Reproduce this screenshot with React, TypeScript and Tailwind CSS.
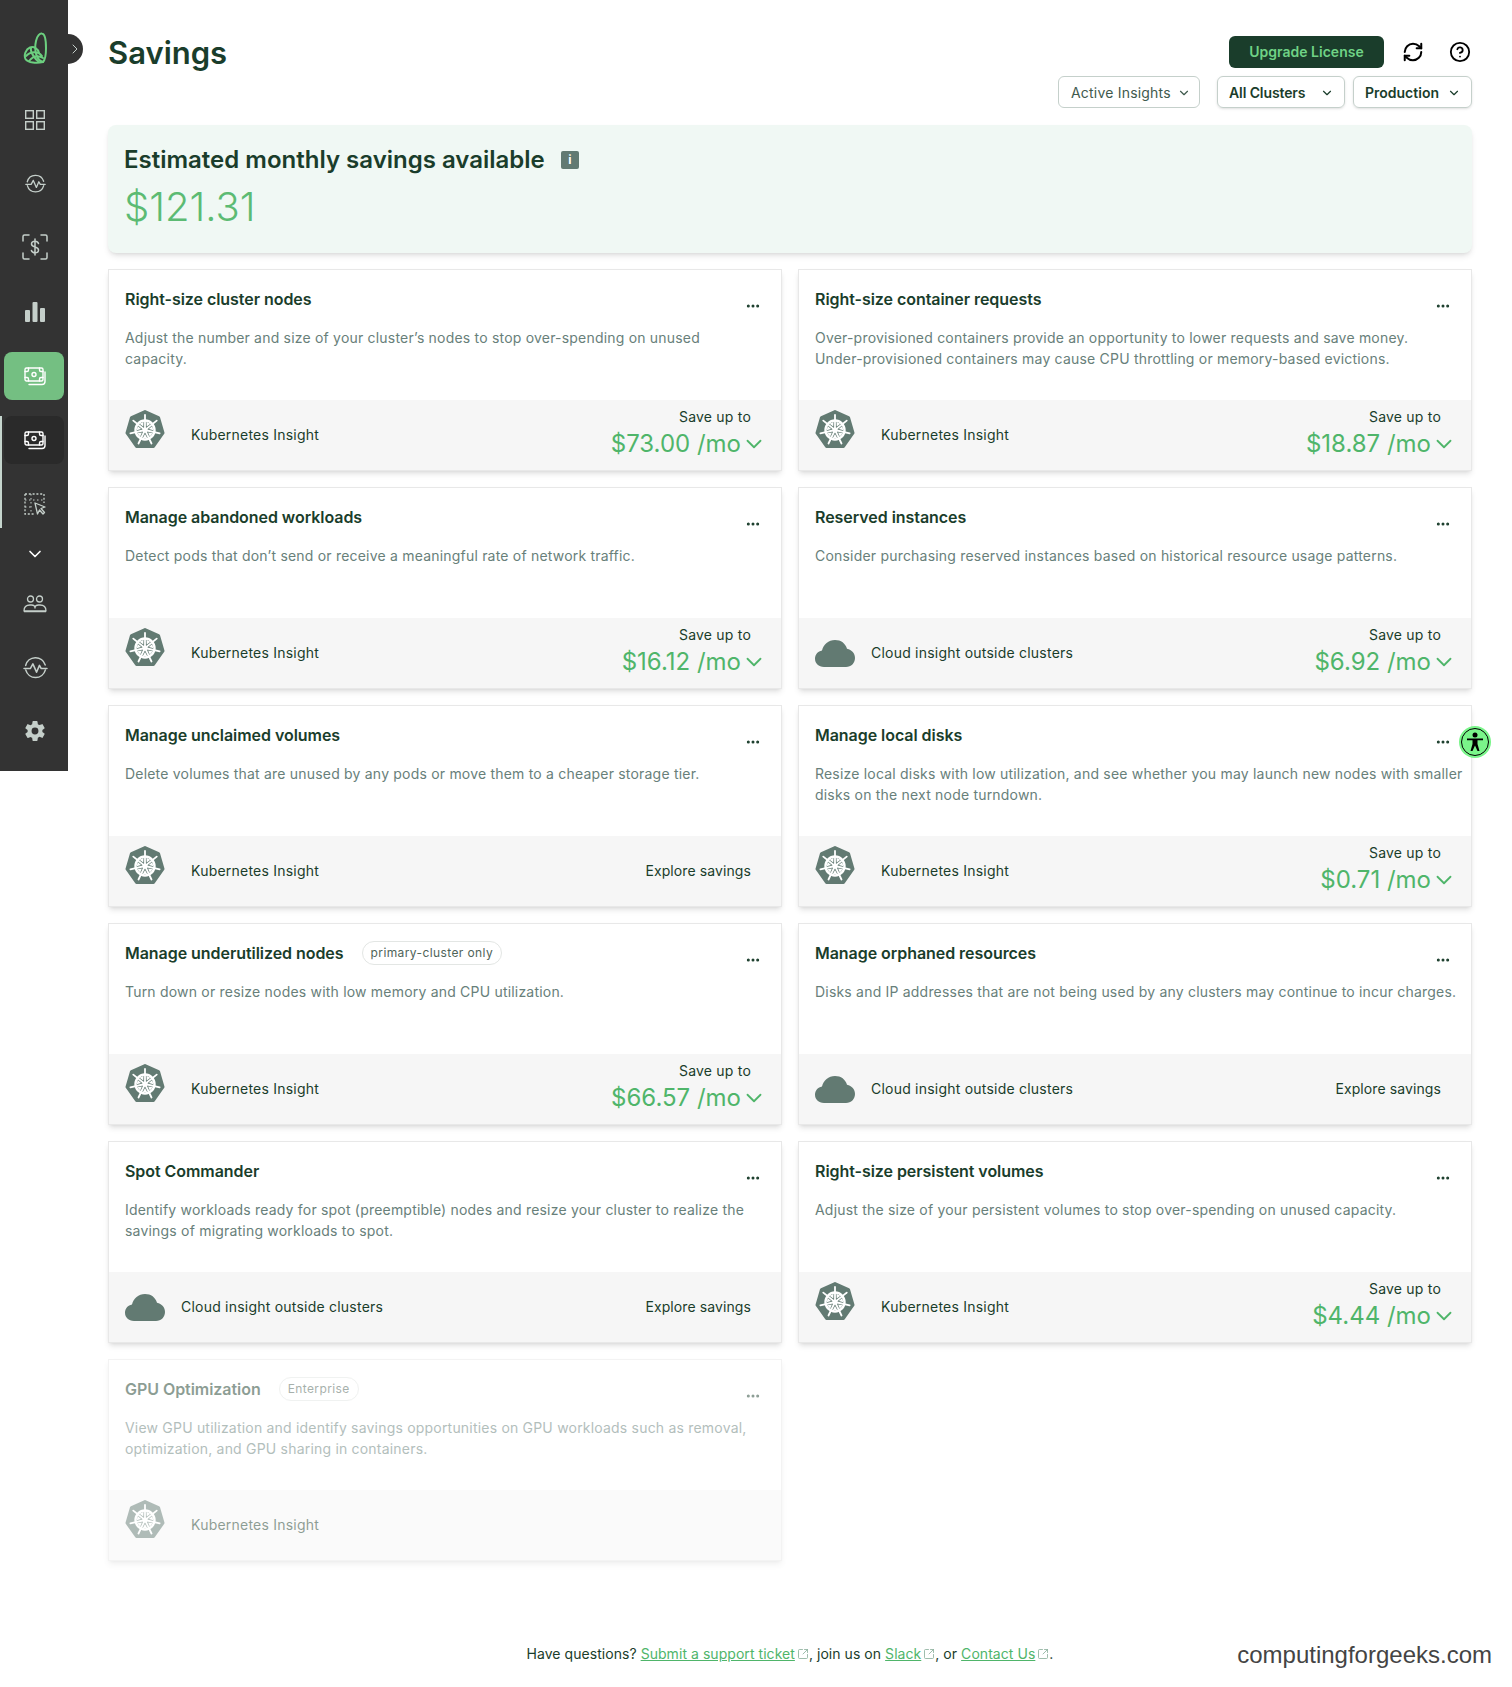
import { ChevronDown, ChevronRight, CircleHelp, Ellipsis, RefreshCw, SquareArrowOutUpRight } from "lucide-react";
import { IoSettingsSharp } from "react-icons/io5";

type Insight = {
  title: string;
  desc: string;
  kind: "k8s" | "cloud";
  amount?: string;
  pill?: string;
  disabled?: boolean;
  noAction?: boolean;
};

const insights: Insight[] = [
  { title: "Right-size cluster nodes", desc: "Adjust the number and size of your cluster’s nodes to stop over-spending on unused\ncapacity.", kind: "k8s", amount: "$73.00" },
  { title: "Right-size container requests", desc: "Over-provisioned containers provide an opportunity to lower requests and save money.\nUnder-provisioned containers may cause CPU throttling or memory-based evictions.", kind: "k8s", amount: "$18.87" },
  { title: "Manage abandoned workloads", desc: "Detect pods that don’t send or receive a meaningful rate of network traffic.", kind: "k8s", amount: "$16.12" },
  { title: "Reserved instances", desc: "Consider purchasing reserved instances based on historical resource usage patterns.", kind: "cloud", amount: "$6.92" },
  { title: "Manage unclaimed volumes", desc: "Delete volumes that are unused by any pods or move them to a cheaper storage tier.", kind: "k8s" },
  { title: "Manage local disks", desc: "Resize local disks with low utilization, and see whether you may launch new nodes with smaller\ndisks on the next node turndown.", kind: "k8s", amount: "$0.71" },
  { title: "Manage underutilized nodes", desc: "Turn down or resize nodes with low memory and CPU utilization.", kind: "k8s", amount: "$66.57", pill: "primary-cluster only" },
  { title: "Manage orphaned resources", desc: "Disks and IP addresses that are not being used by any clusters may continue to incur charges.", kind: "cloud" },
  { title: "Spot Commander", desc: "Identify workloads ready for spot (preemptible) nodes and resize your cluster to realize the\nsavings of migrating workloads to spot.", kind: "cloud" },
  { title: "Right-size persistent volumes", desc: "Adjust the size of your persistent volumes to stop over-spending on unused capacity.", kind: "k8s", amount: "$4.44" },
  { title: "GPU Optimization", desc: "View GPU utilization and identify savings opportunities on GPU workloads such as removal,\noptimization, and GPU sharing in containers.", kind: "k8s", pill: "Enterprise", disabled: true, noAction: true },
];

const spokes = [0, 1, 2, 3, 4, 5, 6].map((i) => (i * 360) / 7);

function K8sIcon() {
  return (
    <svg width="40" height="39" viewBox="0 0 40 39" className="mt-2.5 self-start shrink-0">
      <path d="M20 1.500 L33.500 7.500 L38 23 L28.500 36.500 L11.500 36.500 L2 23 L6.500 7.500 Z" fill="#627a72" stroke="#627a72" strokeWidth="3" strokeLinejoin="round" />
      <circle cx="20" cy="20" r="9.500" fill="none" stroke="#fff" strokeWidth="2.400" />
      <circle cx="20" cy="20" r="2.600" fill="#fff" />
      {spokes.map((a) => (
        <g key={a} transform={`rotate(${a} 20 20)`}>
          <line x1="20" y1="20" x2="20" y2="5" stroke="#fff" strokeWidth="1.800" strokeLinecap="round" />
          <polygon points="17.800,12 22.200,12 20,16" fill="#fff" transform="rotate(25.700 20 20)" />
        </g>
      ))}
    </svg>
  );
}

function CloudIcon() {
  return (
    <svg width="40" height="27" viewBox="0 0 40 27" className="shrink-0">
      <path d="M9 27 C3.500 27 0 23.300 0 18.800 C0 14.500 3 11.400 7 10.600 C8.500 4.300 13.500 0 20 0 C26 0 30.500 3.400 32 8.800 C36.800 9.800 40 13.600 40 18 C40 23 36.200 27 31 27 Z" fill="#627a72" />
    </svg>
  );
}

function MoneyIcon({ color }: { color: string }) {
  return (
    <svg width="22" height="22" viewBox="0 0 22 22" fill="none" stroke={color} strokeWidth="1.400" strokeLinecap="round">
      <rect x="1" y="3" width="18" height="13" rx="1.500" />
      <circle cx="10" cy="9.500" r="2" />
      <path d="M1 6.500h2a1.500 1.500 0 0 0 1.500-1.500V3M19 6.500h-2A1.500 1.500 0 0 1 15.500 5V3M1 12.500h2A1.500 1.500 0 0 1 4.500 14v2M19 12.500h-2a1.500 1.500 0 0 0-1.500 1.500v2" />
      <path d="M21 7v9.500a3 3 0 0 1-3 3H5" />
    </svg>
  );
}

function PulseCircle({ size, stroke }: { size: number; stroke: number }) {
  return (
    <svg width={size} height={size} viewBox="0 0 24 24" fill="none" stroke="#c5cfca" strokeWidth={stroke} strokeLinecap="round" strokeLinejoin="round">
      <path d="M2.600 10A9.700 9.700 0 0 1 21.300 9.500M21.400 14.500A9.700 9.700 0 0 1 2.700 14.500" />
      <path d="M1 13H7l2.500-4.500 3.500 8 2.800-6.500 1.700 3h5.500" />
    </svg>
  );
}

function Sidebar() {
  return (
    <aside className="relative w-[68px] h-[771px] shrink-0 bg-[#333333] flex flex-col items-center">
      <div className="h-[96px] w-full pl-[1px] flex items-center justify-center">
        <svg width="24" height="32" viewBox="0 0 24 32" fill="none" stroke="#6ccf7f" strokeWidth="2" strokeLinecap="round">
          <path d="M20 30 C13 28 11 18 13 9 C14 4 17 1 19 1.500 C22 2 23 8 23 16 C23 22 22 28 20 30 Z" />
          <path d="M20 30 C14 31.500 5 31 2.500 27 C0.500 23 3 17 7 15.500 C11 14 15 17 16 21" />
          <path d="M3 24 C8 19 15 19 19 24 M6 29 C10 24 15 23 20 26 M8 16 C7 20 12 27 16 30" />
        </svg>
      </div>
      <div className="absolute left-[68px] top-[34px] w-[15px] h-[30px] rounded-r-full bg-[#333333] flex items-center">
        <ChevronRight size={16} color="#c5cfca" strokeWidth={1.500} className="-ml-[1px]" />
      </div>
      <div className="absolute left-0 top-[416px] w-[2px] h-[112px] bg-[#c5d5cd]" />

      <div className="h-12 pl-0.5 flex items-center justify-center">
        <svg width="20" height="20" viewBox="0 0 20 20" fill="none" stroke="#c5cfca" strokeWidth="1.400">
          <rect x="0.700" y="0.700" width="7.600" height="7.600" />
          <rect x="11.700" y="0.700" width="7.600" height="7.600" />
          <rect x="0.700" y="11.700" width="7.600" height="7.600" />
          <rect x="11.700" y="11.700" width="7.600" height="7.600" />
        </svg>
      </div>
      <div className="h-12 pl-0.5 mt-[15px] flex items-center justify-center">
        <PulseCircle size={21} stroke={1.500} />
      </div>
      <div className="h-12 pl-0.5 mt-[16px] flex items-center justify-center">
        <svg width="28" height="28" viewBox="0 0 28 28" fill="none" stroke="#c5cfca" strokeWidth="1.500" strokeLinecap="round">
          <path d="M8 2H3.500A1.500 1.500 0 0 0 2 3.500V8M20 2h4.500A1.500 1.500 0 0 1 26 3.500V8M8 26H3.500A1.500 1.500 0 0 1 2 24.500V20M20 26h4.500a1.500 1.500 0 0 0 1.500-1.500V20" />
          <path d="M17.500 10.500C17 9 15.500 8.300 14 8.300c-2 0-3.500 1-3.500 2.800 0 3.900 7 2 7 5.800 0 1.800-1.500 2.800-3.500 2.800-1.700 0-3.100-.8-3.600-2.300M14 6v16" />
        </svg>
      </div>
      <div className="h-12 pl-0.5 mt-[17px] flex items-center justify-center">
        <svg width="20" height="20" viewBox="0 0 20 20" fill="#c5cfca">
          <rect x="0" y="8" width="5" height="12" rx="1" />
          <rect x="7.500" y="0" width="5" height="20" rx="1" />
          <rect x="15" y="6" width="5" height="14" rx="1" />
        </svg>
      </div>
      <div className="w-[60px] h-12 pl-0.5 mt-[16px] rounded-lg bg-[#74bf82] flex items-center justify-center">
        <MoneyIcon color="#ffffff" />
      </div>
      <div className="w-[60px] h-12 pl-0.5 mt-[16px] rounded-lg bg-[#2a2a2a] flex items-center justify-center">
        <MoneyIcon color="#ffffff" />
      </div>
      <div className="h-12 pl-0.5 mt-[16px] flex items-center justify-center">
        <svg width="22" height="22" viewBox="0 0 22 22" fill="none" stroke="#c5cfca" strokeWidth="1.300">
          <path d="M1 1h19v9M1 1v20h9" strokeDasharray="2 1.800" />
          <path d="M7 1v20M1 7h19M1 14h8" strokeDasharray="1.500 2.500" strokeWidth="1" />
          <path d="M11 10l10 4-4 1.500 3.500 4-1.500 1.500-3.500-4-2 4z" strokeLinejoin="round" fill="#333333" />
        </svg>
      </div>
      <div className="h-12 pl-0.5 mt-[2px] flex items-center justify-center">
        <ChevronDown size={20} color="#ffffff" strokeWidth={2} />
      </div>
      <div className="h-12 pl-0.5 mt-[2px] flex items-center justify-center">
        <svg width="24" height="18" viewBox="0 0 24 18" fill="none" stroke="#c5cfca" strokeWidth="1.300" strokeLinejoin="round">
          <circle cx="7.500" cy="4" r="3" />
          <circle cx="16.500" cy="4" r="3" />
          <path d="M1 16c0-4 2.500-6 6-6h1.500c2 0 3.500 1 3.500 3 0-2 1.500-3 3.500-3H17c3.500 0 6 2 6 6zM1 16.500h22" />
        </svg>
      </div>
      <div className="h-12 pl-0.5 mt-[15px] flex items-center justify-center">
        <PulseCircle size={25} stroke={1.500} />
      </div>
      <div className="h-12 pl-0.5 mt-[16px] flex items-center justify-center">
        <IoSettingsSharp size={22} color="#c5cfca" />
      </div>
    </aside>
  );
}

function Card({ item }: { item: Insight }) {
  return (
    <div className={`h-[202px] border border-[#e8e8e8] bg-white shadow-md flex flex-col ${item.disabled ? "opacity-50" : ""}`}>
      <div className="flex-1 pl-4 pr-2.5 pt-[18.500px]">
        <div className="flex items-start justify-between pr-2.5">
          <div className="flex items-center gap-[18px] h-5">
            <h3 className="text-base leading-5 font-semibold tracking-[-0.05px] text-[#1a3d2b]">{item.title}</h3>
            {item.pill && (
              <span className="h-6 px-2 rounded-full border border-[#e3e6e4] text-xs leading-[22px] tracking-[0.4px] text-[#4f6459]">{item.pill}</span>
            )}
          </div>
          <Ellipsis size={16} color="#1a3d2b" strokeWidth={2.500} className="mt-[9.500px]" />
        </div>
        <p className="mt-[12.500px] whitespace-pre text-sm leading-[21.500px] tracking-[0.2px] text-[#68807a]">{item.desc}</p>
      </div>
      <div className="h-[70px] bg-[#f6f6f6] pl-4 pr-[21px] flex items-center justify-between">
        <div className="flex items-center self-stretch">
          {item.kind === "k8s" ? <K8sIcon /> : <CloudIcon />}
          <span className={`text-sm tracking-[0.22px] text-[#1a3d2b] ${item.kind === "k8s" ? "ml-[26px]" : "ml-4"}`}>
            {item.kind === "k8s" ? "Kubernetes Insight" : "Cloud insight outside clusters"}
          </span>
        </div>
        {item.amount ? (
          <div className="flex flex-col items-end self-start pt-[7px]">
            <span className="mr-[9px] text-sm leading-5 tracking-[0.2px] text-[#1a3d2b]">Save up to</span>
            <div className="mt-[3px] -mr-[7px] flex items-center">
              <span className="text-2xl leading-7 text-[#4fb56a]">{item.amount} /mo</span>
              <ChevronDown size={26} color="#4fb56a" strokeWidth={1.700} />
            </div>
          </div>
        ) : item.noAction ? null : (
          <span className="mr-[9px] text-sm tracking-[0.1px] text-[#1a3d2b]">Explore savings</span>
        )}
      </div>
    </div>
  );
}

function ExtLink({ label }: { label: string }) {
  return (
    <>
      <a className="underline text-[#4fb56a]">{label}</a>
      <SquareArrowOutUpRight size={12} color="#7fa791" strokeWidth={1.500} className="inline-block ml-[2px] align-[-1px]" />
    </>
  );
}

export default function App() {
  return (
    <div className="relative w-[1512px] h-[1687px] overflow-hidden bg-white flex items-start font-['Inter',sans-serif]">
      <Sidebar />
      <main className="flex-1 min-w-0 px-10 pt-9">
        <header className="flex items-start justify-between">
          <h1 className="text-[31px] leading-[34px] font-semibold text-[#1a3d2b]">Savings</h1>
          <div className="flex flex-col items-end">
            <div className="flex items-center h-8">
              <button className="w-[155px] h-8 rounded-md bg-[#1a3d2b] text-[#6fd285] text-sm font-semibold">Upgrade License</button>
              <RefreshCw size={22} color="#000" strokeWidth={2.200} className="ml-[18px]" />
              <CircleHelp size={22} color="#000" strokeWidth={2} className="ml-[25px] mr-[1px]" />
            </div>
            <div className="mt-2 flex items-center h-8">
              <div className="w-[142px] h-8 pt-[1px] rounded-md border border-[#c5d0cb] pl-3 pr-2 flex items-center justify-between text-sm tracking-[0.2px] text-[#3f5a4d]">
                Active Insights <ChevronDown size={14} />
              </div>
              <div className="ml-[17px] w-[128px] h-8 pt-[1px] rounded-md border border-[#c5d0cb] shadow-sm pl-[11px] pr-2.5 flex items-center justify-between text-sm font-semibold tracking-[-0.1px] text-[#1a3d2b]">
                All Clusters <ChevronDown size={14} />
              </div>
              <div className="ml-2 w-[119px] h-8 pt-[1px] rounded-md border border-[#c5d0cb] shadow-sm pl-[11px] pr-2.5 flex items-center justify-between text-sm font-semibold text-[#1a3d2b]">
                Production <ChevronDown size={14} />
              </div>
            </div>
          </div>
        </header>

        <section className="mt-[17px] h-[128px] rounded-lg bg-[#f0f8f4] shadow-md pl-4 pt-[19px]">
          <div className="flex items-center h-8">
            <h2 className="text-2xl leading-8 font-semibold text-[#1a3d2b]">Estimated monthly savings available</h2>
            <span className="ml-4 w-[18px] h-[18px] rounded-[2px] bg-[#627a72] text-white text-xs font-bold leading-[18px] text-center">i</span>
          </div>
          <div className="mt-1.5 text-[40px] leading-[50px] text-[#5cbb73] font-light">$121.31</div>
        </section>

        <div className="mt-4 grid grid-cols-2 gap-4">
          {insights.map((item) => (
            <Card key={item.title} item={item} />
          ))}
        </div>

        <footer className="mt-[83px] text-center text-sm leading-5 tracking-[0.05px] text-[#1a3d2b]">
          Have questions? <ExtLink label="Submit a support ticket" />, join us on <ExtLink label="Slack" />, or <ExtLink label="Contact Us" />.
        </footer>
      </main>

      {/* accessibility widget */}
      <div className="absolute left-[1459px] top-[726px] w-8 h-8 rounded-full bg-[#7af58a] flex items-center justify-center">
        <div className="w-7 h-7 rounded-full border border-black flex items-center justify-center">
          <svg width="18" height="20" viewBox="0 0 18 20" fill="#000">
            <circle cx="9" cy="3" r="2.500" />
            <path d="M1 6.500h16v1.800h-5.500V12l2 7h-2L9 13.500 6.500 19h-2l2-7V8.300H1z" />
          </svg>
        </div>
      </div>

      <div className="absolute right-5 top-[1640px] font-['Liberation_Sans',sans-serif] text-[24px] leading-[30px] text-[#444444]">
        computingforgeeks.com
      </div>
    </div>
  );
}
